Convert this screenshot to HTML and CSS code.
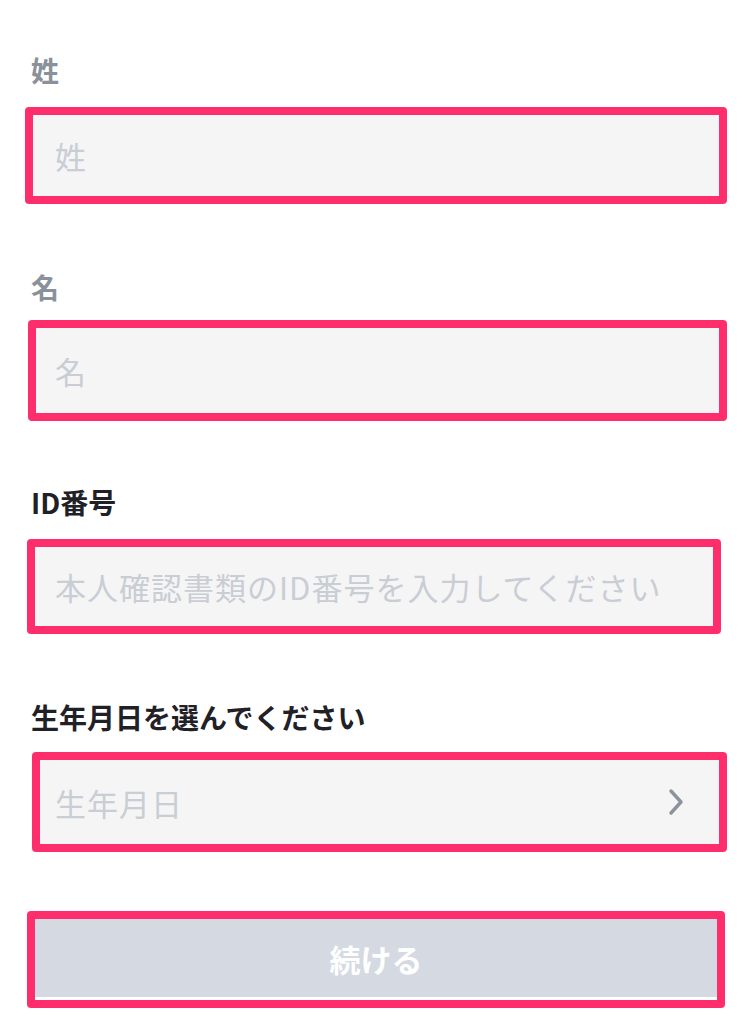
FILE: index.html
```html
<!DOCTYPE html>
<html lang="ja">
<head>
<meta charset="utf-8">
<link rel="stylesheet" href="styles.css">
</head>
<body>
<main class="form">
  <section class="field field-1">
    <div class="label label-muted">姓</div>
    <div class="box box-1"><span class="placeholder">姓</span></div>
  </section>
  <section class="field field-2">
    <div class="label label-muted">名</div>
    <div class="box box-2"><span class="placeholder">名</span></div>
  </section>
  <section class="field field-3">
    <div class="label">ID番号</div>
    <div class="box box-3"><span class="placeholder">本人確認書類のID番号を入力してください</span></div>
  </section>
  <section class="field field-4">
    <div class="label">生年月日を選んでください</div>
    <div class="box box-4">
      <span class="placeholder">生年月日</span>
      <svg class="chevron" width="18" height="28" viewBox="0 0 18 28"><path d="M4 3 L14 14 L4 25" fill="none" stroke="#8c939c" stroke-width="3.4" stroke-linecap="round" stroke-linejoin="round"/></svg>
    </div>
  </section>
  <div class="btn-wrap">
    <div class="button">続ける</div>
  </div>
</main>
</body>
</html>
```

FILE: styles.css
```css
* { box-sizing: border-box; }
html, body { margin: 0; padding: 0; background: #ffffff; }
body {
  width: 750px;
  height: 1022px;
  overflow: hidden;
  font-family: "Noto Sans CJK JP", "Noto Sans", sans-serif;
}
.form {
  display: flex;
  flex-direction: column;
  padding-top: 50px;
}
.field { display: flex; flex-direction: column; }
.label {
  height: 40px;
  line-height: 40px;
  font-size: 28px;
  font-weight: 700;
  color: #1f2126;
  padding-left: 31px;
}
.label-muted { color: #8a919a; }
.box {
  display: flex;
  align-items: center;
  justify-content: space-between;
  border: 8px solid #fe2e6c;
  border-radius: 4px;
  background: #f5f5f6;
}
.placeholder {
  font-size: 31px;
  color: #c9cdd4;
  letter-spacing: 1px;
}
.chevron { margin-right: 34px; }

.box-1 { margin: 17px 23px 0 25px; height: 97px; padding-left: 22px; }
.field-2 { margin-top: 63px; }
.box-2 { margin: 13px 23px 0 28px; height: 101px; padding-left: 19px; }
.field-3 { margin-top: 61px; }
.box-3 { margin: 17px 29px 0 27px; height: 95px; padding-left: 20px; }
.field-4 { margin-top: 63px; }
.box-4 { margin: 15px 23px 0 32px; height: 100px; padding-left: 15px; }

.btn-wrap { margin: 59px 25px 0 27px; }
.button {
  height: 97px;
  border: 8px solid #fe2e6c;
  border-radius: 4px;
  background: #d5d9e1;
  box-shadow: inset 0 -3px 0 #ffffff;
  display: flex;
  align-items: center;
  justify-content: center;
  color: #ffffff;
  font-size: 31px;
  font-weight: 700;
  padding-bottom: 2px;
}
```
